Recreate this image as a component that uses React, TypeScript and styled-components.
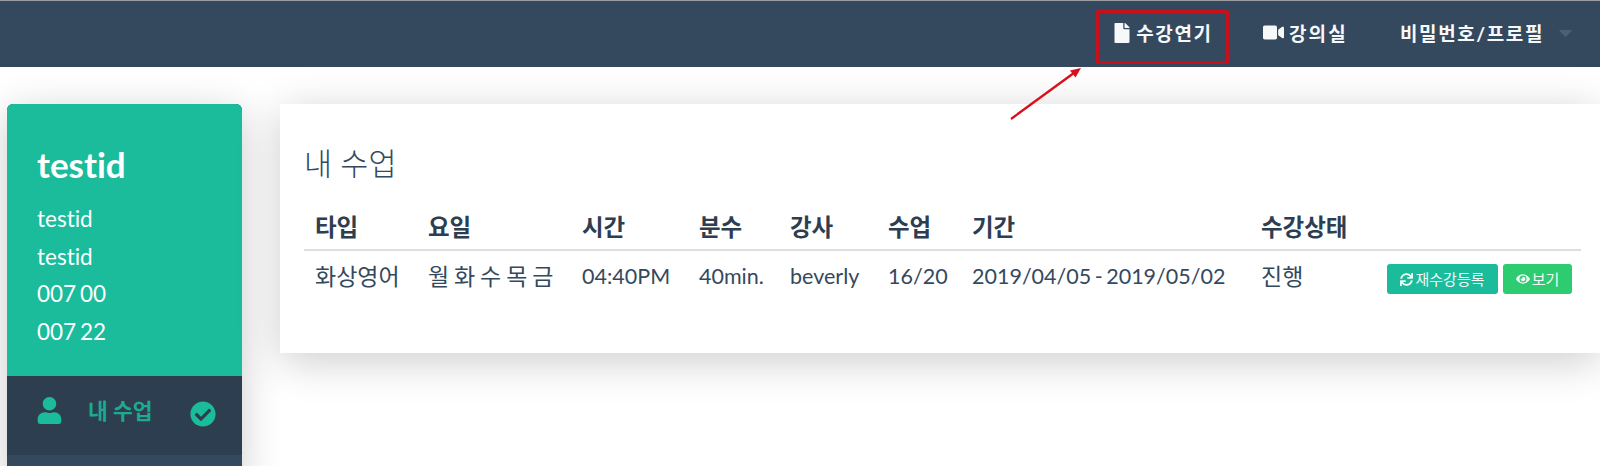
import React from "react";
import styled, { createGlobalStyle } from "styled-components";
import { FaCaretDown, FaCheckCircle, FaEye, FaFile, FaSync, FaUser, FaVideo } from "react-icons/fa";

const Global = createGlobalStyle`
  html, body { margin: 0; padding: 0; background: #fff; height: 466px; overflow: hidden; }
  body { font-family: Lato, "Noto Sans CJK KR", sans-serif; color: #2c3e50; font-variant-ligatures: none; }
`;
const Page = styled.div`
  position: relative;
  width: 1600px;
  height: 466px;
  box-sizing: border-box;
  overflow: hidden;
  border-top: 1px solid #9a9fa5;
`;
const Navbar = styled.header`
  position: relative;
  z-index: 1;
  height: 66px;
  box-sizing: border-box;
  background: #34495e;
  display: flex;
  justify-content: flex-end;
  align-items: center;
  padding: 5px 21px 0 0;
  color: #fff;
`;
const NavItem = styled.a<{ $boxed?: boolean }>`
  display: flex;
  align-items: center;
  justify-content: center;
  box-sizing: border-box;
  gap: 4px;
  height: 54px;
  padding-bottom: 8px;
  width: ${(p) => (p.$boxed ? "133px" : "auto")};
  border: ${(p) => (p.$boxed ? "3px solid #c8101c" : "3px solid transparent")};
  border-radius: 2px;
  font-size: 19px;
  font-weight: 700;
  letter-spacing: 1.6px;
  color: #f6f8f9;
`;
const VideoItem = styled(NavItem)`
  margin-left: 31px;
  gap: 5px;
  letter-spacing: 2.2px;
`;
const ProfileItem = styled(NavItem)`
  margin-left: 46px;
  gap: 11px;
`;
const Caret = styled(FaCaretDown)`
  color: #4a6079;
  font-size: 21px;
`;
const Body = styled.main`
  display: flex;
  align-items: flex-start;
  gap: 38px;
  padding: 37px 0 0 7px;
`;
const Sidebar = styled.aside`
  width: 235px;
  flex: none;
  height: 380px;
  border-radius: 6px 6px 0 0;
  overflow: hidden;
  background: #34495e;
  box-shadow: 0 8px 40px rgba(0, 0, 0, 0.2);
`;
const Profile = styled.div`
  background: #1abc9c;
  height: 272px;
  box-sizing: border-box;
  padding: 42px 30px 0;
  color: #fff;
`;
const ProfileName = styled.div`
  font-size: 35px;
  font-weight: 700;
  line-height: 36px;
  margin-bottom: 18px;
`;
const ProfileLine = styled.div<{ $digits?: boolean }>`
  font-size: 22.5px;
  word-spacing: ${(p) => (p.$digits ? "-2px" : "0")};
  line-height: 37.5px;
`;
const MenuRow = styled.div`
  height: 79px;
  background: #2c3e50;
  display: flex;
  align-items: flex-start;
  padding: 21px 0 0 29px;
  box-sizing: border-box;
  color: #1abc9c;
`;
const MenuIcon = styled(FaUser)`
  font-size: 27px;
  flex: none;
`;
const MenuLabel = styled.span`
  font-size: 21.5px;
  font-weight: 700;
  line-height: 28px;
  margin-left: 25px;
  color: #1fa98e;
  flex: none;
`;
const MenuCheck = styled(FaCheckCircle)`
  font-size: 26px;
  margin: 4px 0 0 37px;
  flex: none;
`;
const Panel = styled.section`
  flex: 1;
  height: 249px;
  box-sizing: border-box;
  background: #fff;
  padding: 39px 19px 0 24px;
  box-shadow: 0 8px 40px rgba(0, 0, 0, 0.2);
`;
const Title = styled.h2`
  margin: 0;
  font-size: 30.5px;
  font-weight: 300;
  line-height: 40px;
  color: #34495e;
`;
const Table = styled.table`
  width: 100%;
  table-layout: fixed;
  border-collapse: collapse;
  margin-top: 19px;
`;
const Th = styled.th<{ $w: number }>`
  width: ${(p) => p.$w}px;
  padding: 0 0 0 11px;
  height: 48px;
  text-align: left;
  font-size: 23.5px;
  font-weight: 700;
  color: #2c3e50;
  border-bottom: 2px solid #dcdfe1;
  box-sizing: border-box;
`;
const Td = styled.td<{ $korean?: boolean }>`
  padding: 8px 0 0 11px;
  vertical-align: top;
  font-size: ${(p) => (p.$korean ? "23px" : "21.5px")};
  word-spacing: ${(p) => (p.$korean ? "-1px" : "-2px")};
  line-height: 34px;
  color: #34495e;
  white-space: nowrap;
`;
const ActionCell = styled.td`
  padding: 13px 0 0 0;
  vertical-align: top;
`;
const Actions = styled.div`
  display: flex;
  justify-content: flex-end;
  gap: 5px;
  padding-right: 9px;
`;
const SmallButton = styled.a<{ $color: string; $w: number }>`
  display: flex;
  align-items: center;
  justify-content: center;
  gap: 2px;
  box-sizing: border-box;
  width: ${(p) => p.$w}px;
  height: 30px;
  background: ${(p) => p.$color};
  border-radius: 3px;
  color: #f2fbf8;
  font-size: 15px;
  line-height: 1;
`;
const Arrow = styled.svg`
  position: absolute;
  z-index: 2;
  left: 1000px;
  top: 60px;
`;

const columns: [string, number][] = [
  ["타입", 113], ["요일", 154], ["시간", 117], ["분수", 91], ["강사", 98], ["수업", 84], ["기간", 289], ["수강상태", 120], ["", 211],
];
const row: [string, boolean][] = [
  ["화상영어", true], ["월 화 수 목 금", true], ["04:40PM", false], ["40min.", false], ["beverly", false], ["16/20", false], ["2019/04/05 - 2019/05/02", false], ["진행", true],
];

export default function App() {
  return (
    <Page>
      <Global />
      <Navbar>
        <NavItem $boxed><FaFile size={20} />수강연기</NavItem>
        <VideoItem><FaVideo size={21} />강의실</VideoItem>
        <ProfileItem>비밀번호/프로필<Caret /></ProfileItem>
      </Navbar>
      <Arrow width="90" height="65" viewBox="0 0 90 65">
        <path d="M11 58 L78 9" stroke="#d8101c" strokeWidth="2.4" fill="none" />
        <path d="M81 7 L70 9.5 L75.5 16.5 Z" fill="#d8101c" />
      </Arrow>
      <Body>
        <Sidebar>
          <Profile>
            <ProfileName>testid</ProfileName>
            <ProfileLine>testid</ProfileLine>
            <ProfileLine>testid</ProfileLine>
            <ProfileLine $digits>007 00</ProfileLine>
            <ProfileLine $digits>007 22</ProfileLine>
          </Profile>
          <MenuRow>
            <MenuIcon />
            <MenuLabel>내 수업</MenuLabel>
            <MenuCheck />
          </MenuRow>
        </Sidebar>
        <Panel>
          <Title>내 수업</Title>
          <Table>
            <thead>
              <tr>{columns.map(([label, w], i) => <Th key={i} $w={w}>{label}</Th>)}</tr>
            </thead>
            <tbody>
              <tr>
                {row.map(([cell, korean]) => <Td key={cell} $korean={korean}>{cell}</Td>)}
                <ActionCell>
                  <Actions>
                    <SmallButton $color="#1abc9c" $w={111}><FaSync size={13} />재수강등록</SmallButton>
                    <SmallButton $color="#2ecc71" $w={69}><FaEye size={14} />보기</SmallButton>
                  </Actions>
                </ActionCell>
              </tr>
            </tbody>
          </Table>
        </Panel>
      </Body>
    </Page>
  );
}
